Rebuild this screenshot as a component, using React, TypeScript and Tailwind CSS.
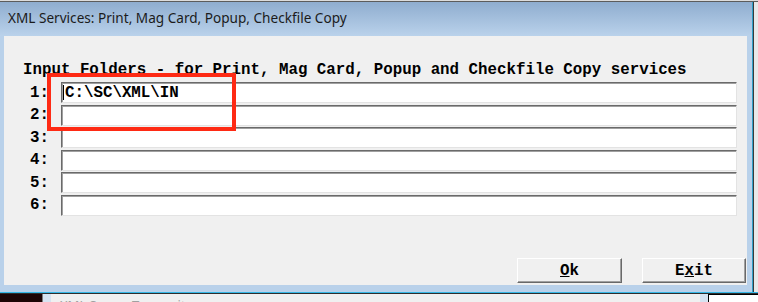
const mono = "font-['Liberation_Mono','Courier_New',monospace] font-bold text-[15.8px] leading-[18px] text-black";

const folders = ["C:\\SC\\XML\\IN", "", "", "", "", ""];

function FolderRow({ index, value }: { index: number; value: string }) {
  return (
    <div className="flex items-center h-[21px]">
      <div className={`w-[26px] text-right ${mono}`}>{index}:</div>
      <div className="ml-[12px] w-[676px] h-[21px] bg-white border border-t-[#6a6a6a] border-l-[#6a6a6a] border-r-[#e3e3e3] border-b-[#e3e3e3] shadow-[inset_1px_1px_0_#a0a0a0] flex items-center pl-px">
        {index === 1 && <span className="w-px h-[15px] bg-black" />}
        <span className={`${mono} ml-px`}>{value}</span>
      </div>
    </div>
  );
}

function DialogButton({ children, width }: { children: React.ReactNode; width: string }) {
  return (
    <button
      className={`${width} h-[25px] bg-[#f0f0f0] border border-t-white border-l-white border-r-[#696969] border-b-[#696969] shadow-[inset_-1px_-1px_0_#a0a0a0] flex items-center justify-center ${mono}`}
    >
      {children}
    </button>
  );
}

export default function App() {
  return (
    <div className="relative w-[758px] h-[302px] overflow-hidden bg-[#f0f0f0] flex flex-col">
      {/* strip of the window behind */}
      <div className="h-[2px] flex flex-col">
        <div className="h-px bg-[#dcdcdc]" />
        <div className="h-px bg-[#5c5c5c]" />
      </div>

      <div className="flex h-[290px]">
        <div className="w-[752px] flex flex-col bg-[#b9d1ea]">
          <div className="h-[34px] bg-gradient-to-b from-[#8fadcf] to-[#bad2eb] flex items-center pl-[8px] pb-[1px]">
            <span className="font-['Noto_Sans',sans-serif] text-[13.6px] text-[#1b1b1b]">
              XML Services: Print, Mag Card, Popup, Checkfile Copy
            </span>
          </div>
          <div className="flex-1 pl-[4px] pr-[5px] pb-[7px] flex">
            <div className="flex-1 bg-[#f0f0f0] flex flex-col pt-[25px] pl-[19px] pb-[2px]">
              <div className={mono}>Input Folders - for Print, Mag Card, Popup and Checkfile Copy services</div>
              <div className="mt-[3px] flex flex-col gap-[1.5px]">
                {folders.map((f, i) => (
                  <FolderRow key={i} index={i + 1} value={f} />
                ))}
              </div>
              <div className="mt-auto flex justify-end gap-[20px] pr-[1px]">
                <DialogButton width="w-[105px]">
                  <u>O</u>k
                </DialogButton>
                <DialogButton width="w-[104px]">
                  E<u>x</u>it
                </DialogButton>
              </div>
            </div>
          </div>
        </div>
        <div className="flex-1 flex">
          <div className="w-px bg-[#2f9fc8]" />
          <div className="w-px bg-[#3a3a3a]" />
          <div className="flex-1 bg-[#e8e8e8]" />
        </div>
      </div>

      <div className="h-px bg-[#35b7e6]" />
      <div className="h-px bg-[#2e2e2e]" />

      {/* window below */}
      <div className="h-[8px] flex">
        <div className="w-[42px] bg-[#1c0404]" />
        <div className="w-px bg-[#7c7c7c]" />
        <div className="w-[8px] bg-[#d6e3f1]" />
        <div className="flex-1 bg-[#f0f0f0] pl-[9px] overflow-hidden">
          <div className="pt-[3px] font-['Noto_Sans',sans-serif] text-[13px] leading-[16px] text-[#a0a0a0]">
            XML Server Transmit
          </div>
        </div>
        <div className="w-[8px] bg-[#d6e3f1]" />
        <div className="w-[50px] bg-white border-t border-l border-black" />
      </div>

      {/* red annotation box */}
      <div className="absolute left-[47px] top-[73px] w-[189px] h-[58px] border-4 border-[#fe2a14]" />
    </div>
  );
}
